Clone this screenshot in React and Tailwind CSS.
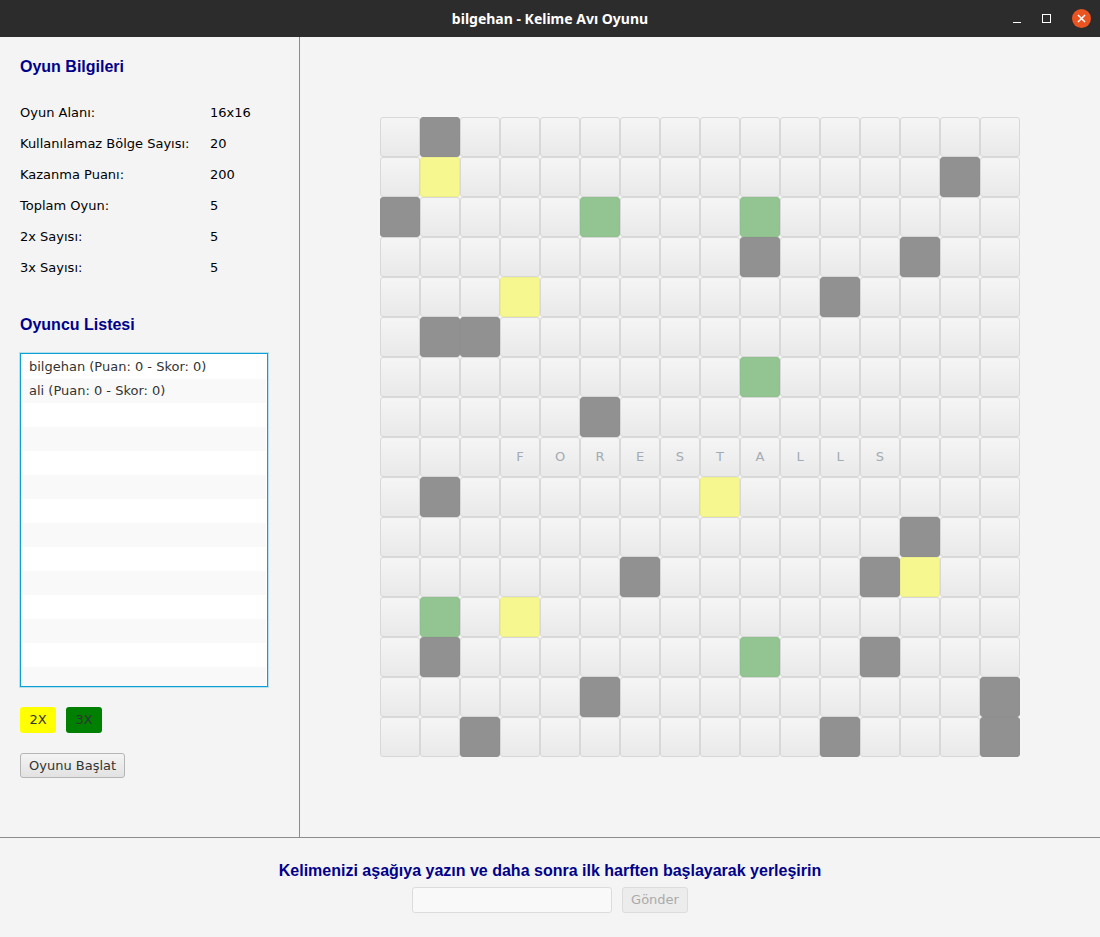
const GRAY = [
  [0, 1], [1, 14], [2, 0], [3, 9], [3, 13], [4, 11], [5, 1], [5, 2], [7, 5],
  [9, 1], [10, 13], [11, 6], [11, 12], [13, 1], [13, 12], [14, 5], [14, 15],
  [15, 2], [15, 11], [15, 15],
];
const YELLOW = [[1, 1], [4, 3], [9, 8], [11, 13], [12, 3]];
const GREEN = [[2, 5], [2, 9], [6, 9], [12, 1], [13, 9]];
const WORD = 'FORESTALLS';

const has = (list, r, c) => list.some(([a, b]) => a === r && b === c);

function Cell({ r, c }) {
  let cls = 'border-[#d8d8d8] bg-gradient-to-b from-[#f5f5f5] to-[#e9e9e9]';
  if (has(GRAY, r, c)) cls = 'border-[#8f8f8f] bg-[#919191]';
  else if (has(YELLOW, r, c)) cls = 'border-[#eeee88] bg-[#f7f78f]';
  else if (has(GREEN, r, c)) cls = 'border-[#8fc08e] bg-[#93c592]';
  const letter = r === 8 && c >= 3 && c < 3 + WORD.length ? WORD[c - 3] : '';
  return (
    <div
      className={`w-[40px] h-[40px] rounded-[3px] border flex items-center justify-center text-[13px] text-[#a3abb3] ${cls}`}
    >
      {letter}
    </div>
  );
}

const info = [
  ['Oyun Alanı:', '16x16'],
  ['Kullanılamaz Bölge Sayısı:', '20'],
  ['Kazanma Puanı:', '200'],
  ['Toplam Oyun:', '5'],
  ['2x Sayısı:', '5'],
  ['3x Sayısı:', '5'],
];

const players = ['bilgehan (Puan: 0 - Skor: 0)', 'ali (Puan: 0 - Skor: 0)'];

export default function App() {
  const rows = Array.from({ length: 16 }, (_, i) => i);
  const listRows = Array.from({ length: 14 }, (_, i) => i);
  const sans = { fontFamily: '"DejaVu Sans", sans-serif' };
  const head = { fontFamily: '"Liberation Sans", Arial, sans-serif' };

  return (
    <div className="w-[1100px] h-[937px] flex flex-col bg-[#f4f4f4] text-[13px] text-black" style={sans}>
      {/* title bar */}
      <div className="h-[37px] bg-[#2c2c2c] flex items-center relative shrink-0">
        <div
          className="flex-1 text-center text-white text-[14px] font-bold"
          style={{ fontFamily: '"Noto Sans", sans-serif' }}
        >
          bilgehan - Kelime Avı Oyunu
        </div>
        <div className="absolute right-[9px] top-0 h-[37px] flex items-center gap-[21px]">
          <div className="w-[8px] h-[1px] bg-white mt-[8px]" />
          <div className="w-[9px] h-[9px] border border-white" />
          <div className="w-[19px] h-[19px] rounded-full bg-[#e95420] flex items-center justify-center">
            <svg width="9" height="9" viewBox="0 0 9 9">
              <path d="M1 1L8 8M8 1L1 8" stroke="white" strokeWidth="1.5" />
            </svg>
          </div>
        </div>
      </div>

      {/* main */}
      <div className="h-[801px] flex border-b border-[#8c8c8c] shrink-0">
        <div className="w-[300px] border-r border-[#8c8c8c] pl-[20px] pt-[21px]">
          <div className="h-[18px] leading-[18px] text-[16px] font-bold text-[#00008b]" style={head}>
            Oyun Bilgileri
          </div>
          <div className="mt-[21px]">
            {info.map(([k, v]) => (
              <div key={k} className="h-[31px] flex items-center">
                <div className="w-[190px]">{k}</div>
                <div>{v}</div>
              </div>
            ))}
          </div>
          <div className="mt-[33px] h-[18px] leading-[18px] text-[16px] font-bold text-[#00008b]" style={head}>
            Oyuncu Listesi
          </div>
          <div className="mt-[19px] w-[248px] h-[334px] border border-[#0c9fd6] shadow-[0_0_0_1px_rgba(12,159,214,0.25)] bg-white p-[1px] overflow-hidden">
            {listRows.map((i) => (
              <div
                key={i}
                className={`h-[24px] flex items-center pl-[7px] text-[#333333] ${i % 2 ? 'bg-[#f9f9f9]' : 'bg-white'}`}
              >
                {players[i] || ''}
              </div>
            ))}
          </div>
          <div className="mt-[20px] flex gap-[10px]">
            <div className="w-[36px] h-[26px] rounded-[3px] bg-[#ffff00] flex items-center justify-center text-[#333333]">
              2X
            </div>
            <div className="w-[36px] h-[26px] rounded-[3px] bg-[#008000] flex items-center justify-center text-[#333333]">
              3X
            </div>
          </div>
          <button className="mt-[20px] h-[25px] px-[8px] rounded-[3px] border border-[#b5b5b5] bg-gradient-to-b from-[#f4f4f4] to-[#e2e2e2] text-[#333333] text-[13px] flex items-center">
            Oyunu Başlat
          </button>
        </div>
        <div className="flex-1 flex items-center justify-center">
          <div className="grid grid-cols-[repeat(16,40px)]">
            {rows.map((r) => rows.map((c) => <Cell key={`${r}-${c}`} r={r} c={c} />))}
          </div>
        </div>
      </div>

      {/* bottom */}
      <div className="flex-1 flex flex-col items-center pt-[24px]">
        <div className="h-[18px] leading-[18px] text-[16px] font-bold text-[#00008b]" style={head}>
          Kelimenizi aşağıya yazın ve daha sonra ilk harften başlayarak yerleşirin
        </div>
        <div className="mt-[7px] flex gap-[10px]">
          <div className="w-[200px] h-[26px] rounded-[3px] border border-[#dcdcdc] bg-[#f9f9f9]" />
          <button className="w-[66px] h-[26px] rounded-[3px] border border-[#dcdcdc] bg-[#ececec] text-[#aaaaaa] text-[13px]">
            Gönder
          </button>
        </div>
      </div>
    </div>
  );
}
